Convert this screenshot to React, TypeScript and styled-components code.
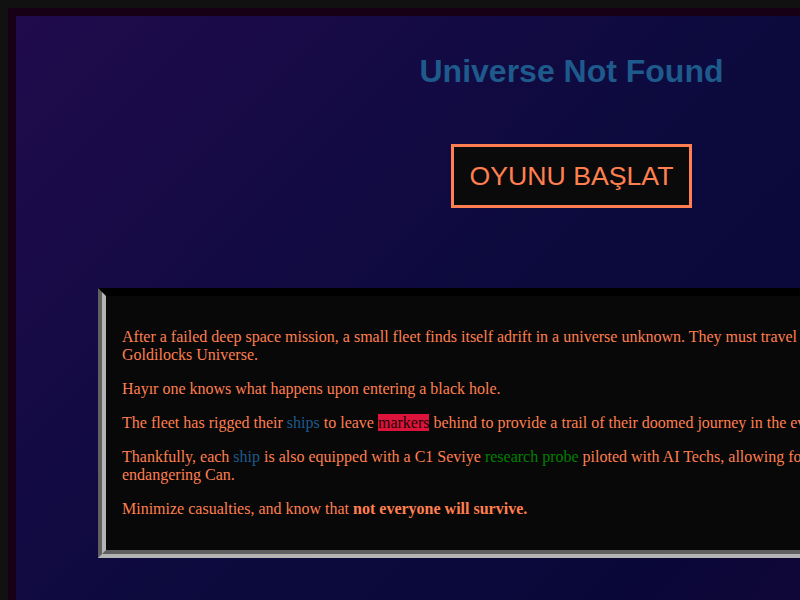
import React from "react";
import styled, { createGlobalStyle } from "styled-components";

const GlobalStyle = createGlobalStyle`
  html {
    background: #111111;
  }
  body {
    margin: 8px 0 0 8px;
    font-family: "Liberation Serif", "Times New Roman", serif;
    font-size: 16px;
  }
`;

/* Viewport-sized window with a dark plum edge; the stage inside is wider and gets clipped */
const Frame = styled.div`
  height: calc(100vh - 8px);
  box-sizing: border-box;
  border-left: 8px solid #170016;
  border-top: 8px solid #170016;
  overflow: hidden;
  background: #0c0a3e;
`;

const Stage = styled.div`
  width: 1111px;
  min-height: 700px;
  background: linear-gradient(135deg, #200b4c 0%, #0c0a3e 40%, #0a0738 65%, #1e0532 100%);
  display: flex;
  flex-direction: column;
  align-items: center;
  padding-top: 37px;
`;

const Title = styled.h1`
  margin: 0;
  font-family: "Liberation Sans", Arial, sans-serif;
  font-size: 32px;
  font-weight: bold;
  line-height: 37px;
  color: #1e5a8c;
`;

const StartButton = styled.button`
  margin-top: 54px;
  padding: 13px 16px;
  border: 3px solid #ff7f50;
  background: #0a0a0a;
  color: #ff7f50;
  font-family: "Liberation Sans", Arial, sans-serif;
  font-size: 26.67px;
  line-height: 32px;
  cursor: pointer;
`;

const Panel = styled.section`
  align-self: stretch;
  margin: 80px 82px 0 82px;
  padding: 16px;
  border: 8px groove #b4b4b4;
  border-top: 8px solid #000000;
  background: #080808;
  color: #ff7f50;
`;

const Para = styled.p`
  margin: 16px 0;
  line-height: 18px;
`;

const Ship = styled.span`
  color: #1e5a8c;
`;

const Marker = styled.span`
  background: #dc143c;
  color: #1a0505;
`;

const Probe = styled.span`
  color: #008000;
`;

export default function App() {
  return (
    <>
      <GlobalStyle />
      <Frame>
        <Stage>
          <Title>Universe Not Found</Title>
          <StartButton>OYUNU BAŞLAT</StartButton>
          <Panel>
            <Para>
              After a failed deep space mission, a small fleet finds itself adrift in a universe
              unknown. They must travel through black holes to the Goldilocks Universe.
            </Para>
            <Para>Hayır one knows what happens upon entering a black hole.</Para>
            <Para>
              The fleet has rigged their <Ship>ships</Ship> to leave <Marker>markers</Marker>{" "}
              behind to provide a trail of their doomed journey in the event of failure.
            </Para>
            <Para>
              Thankfully, each <Ship>ship</Ship> is also equipped with a C1 Seviye{" "}
              <Probe>research probe</Probe> piloted with AI Techs, allowing for safe exploration
              without endangering Can.
            </Para>
            <Para>
              Minimize casualties, and know that <strong>not everyone will survive.</strong>
            </Para>
          </Panel>
        </Stage>
      </Frame>
    </>
  );
}
